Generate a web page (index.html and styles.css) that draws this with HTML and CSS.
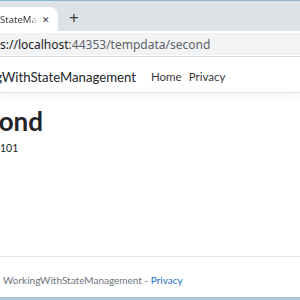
FILE: index.html
```html
<!DOCTYPE html>
<html>
<head>
<meta charset="utf-8">
<link rel="stylesheet" href="styles.css">
</head>
<body>
<div class="window">
  <div class="win-top"></div>
  <div class="tabstrip">
    <div class="tab">
      <span class="tab-title">StateMana</span>
      <span class="tab-close">&#x2715;</span>
    </div>
    <span class="tab-new">+</span>
  </div>
  <div class="toolbar">
    <div class="omnibox"><span class="url-host">s://localhost</span><span class="url-rest">:44353/tempdata/second</span></div>
  </div>
  <div class="page">
    <header class="navbar">
      <div class="brand-box"><span class="brand">WorkingWithStateManagement</span></div>
      <nav class="nav">
        <a class="nav-link">Home</a>
        <a class="nav-link">Privacy</a>
      </nav>
    </header>
    <main class="main">
      <div class="title-box"><h1 class="title">Second</h1></div>
      <p class="value">101</p>
    </main>
    <footer class="footer">
      <span class="footer-text">WorkingWithStateManagement - <a class="footer-link">Privacy</a></span>
    </footer>
  </div>
  <div class="win-bottom"></div>
</div>
</body>
</html>
```

FILE: styles.css
```css
html, body {
  margin: 0;
  padding: 0;
  background: #ffffff;
}
body {
  width: 300px;
  height: 300px;
  overflow: hidden;
  font-family: "Lato", "Noto Sans", sans-serif;
}
.window {
  display: flex;
  flex-direction: column;
  height: 300px;
}
.win-top {
  height: 1px;
  background: #8cb8d8;
}
.tabstrip {
  height: 30px;
  background: #dee1e6;
  display: flex;
  align-items: flex-end;
  font-family: "Noto Sans", sans-serif;
}
.tab {
  width: 58px;
  height: 24px;
  background: #ffffff;
  border-radius: 0 8px 0 0;
  display: flex;
  align-items: center;
  overflow: hidden;
}
.tab-title {
  width: 38px;
  overflow: hidden;
  white-space: nowrap;
  font-size: 9.5px;
  color: #3c4043;
  -webkit-mask-image: linear-gradient(to right, #000 78%, transparent);
  mask-image: linear-gradient(to right, #000 78%, transparent);
}
.tab-close {
  margin-left: 4px;
  font-size: 9px;
  color: #3c4043;
}
.tab-new {
  margin-left: 11px;
  height: 24px;
  line-height: 22px;
  font-size: 17px;
  color: #3c4043;
}
.toolbar {
  height: 26px;
  padding: 2px 0 1px;
  background: #ffffff;
  border-bottom: 1px solid #dadce0;
  box-sizing: border-box;
  display: flex;
  align-items: center;
  font-family: "Noto Sans", sans-serif;
}
.omnibox {
  flex: 1;
  height: 22px;
  background: #f1f3f4;
  display: flex;
  align-items: center;
  white-space: nowrap;
  font-size: 12px;
}
.url-host {
  color: #202124;
}
.url-rest {
  color: #5f6368;
}
.page {
  flex: 1;
  display: flex;
  flex-direction: column;
  color: #212529;
}
.navbar {
  height: 36px;
  padding-top: 4px;
  box-sizing: border-box;
  border-bottom: 1px solid #e5e5e5;
  box-shadow: 0 3px 8px rgba(0, 0, 0, 0.05);
  display: flex;
  align-items: center;
}
.brand-box {
  width: 136px;
  flex-shrink: 0;
  display: flex;
  justify-content: flex-end;
  white-space: nowrap;
}
.brand {
  font-size: 13.2px;
  flex-shrink: 0;
  color: #212529;
}
.nav {
  display: flex;
  gap: 7px;
  margin-left: 15px;
}
.nav-link {
  font-size: 11.5px;
  color: #3a3a3a;
}
.main {
  flex: 1;
  padding-top: 14px;
}
.title-box {
  width: 43px;
  display: flex;
  justify-content: flex-end;
}
.title {
  margin: 0;
  font-size: 26px;
  font-weight: 700;
  line-height: 28px;
  color: #212529;
}
.value {
  margin: 7px 0 0;
  font-size: 10.5px;
  color: #212529;
}
.footer {
  height: 41px;
  box-sizing: border-box;
  padding-top: 6px;
  border-top: 1px solid #e5e5e5;
  display: flex;
  align-items: center;
  white-space: nowrap;
  padding-left: 3px;
  font-size: 10px;
  color: #6c757d;
}
.footer-link {
  color: #1b6ec2;
}
.win-bottom {
  height: 3px;
  background: #a9c4d6;
}
```
